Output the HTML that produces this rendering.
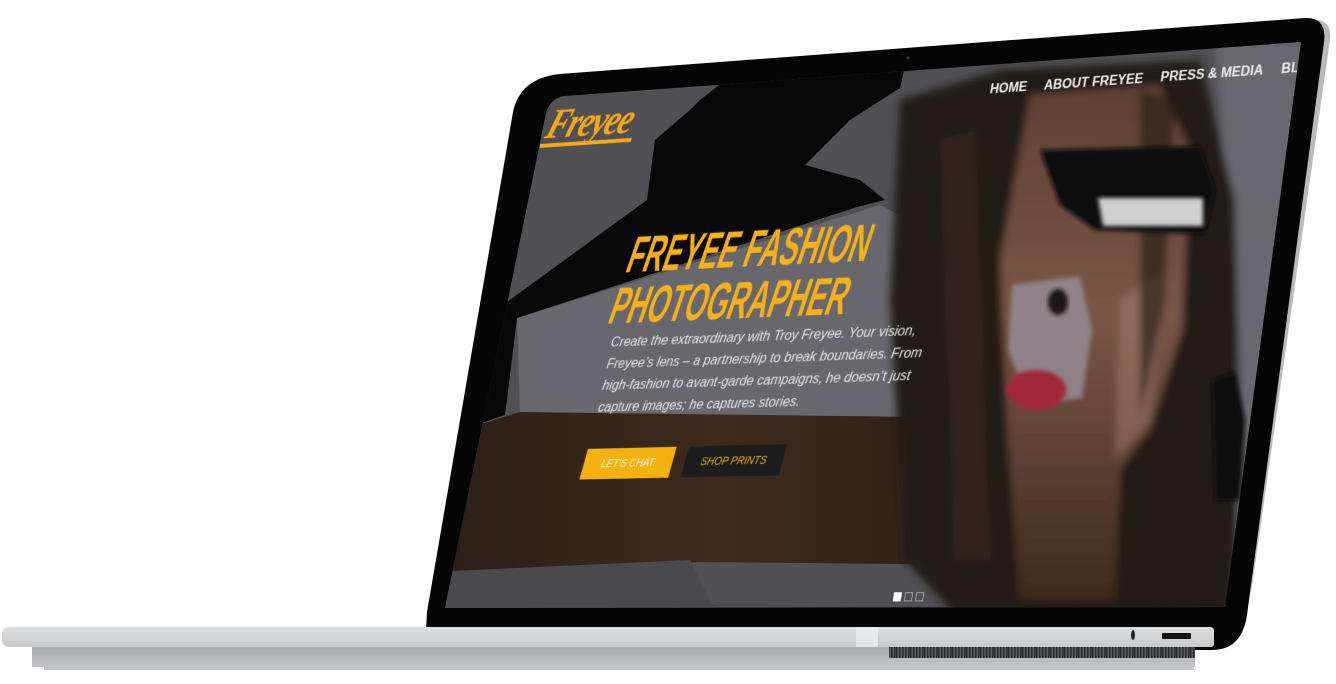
<!DOCTYPE html>
<html><head><meta charset="utf-8"><style>
html,body{margin:0;padding:0;background:#fff;width:1336px;height:684px;overflow:hidden;position:relative}
svg{position:absolute;left:0;top:0}
#scr{position:absolute;left:0;top:0;width:1000px;height:625px;overflow:hidden;transform-origin:0 0;
transform:matrix3d(0.62853,-0.058954,0,-0.000094137,-0.201008,0.772512,0,-0.0000741632,0,0,1,0,550,97,0,1);
font-family:"Liberation Sans",sans-serif}
.logo{position:absolute;left:12px;top:4px;color:#f5a917;font-family:"Liberation Serif",serif;font-style:italic;font-weight:bold;font-size:54px;letter-spacing:-3px;transform:skewX(-10deg) scaleX(.9);transform-origin:0 0}
.logo:after{content:"";position:absolute;left:-6px;right:-10px;top:56px;height:5px;background:#f5a917}
.nav{position:absolute;left:615px;top:22px;white-space:nowrap;color:#eee;font-weight:bold;font-size:16px}
.nav span{margin-right:22px}
h1{position:absolute;left:168px;top:176px;margin:0;color:#f6b01a;font-family:"Liberation Sans Narrow","Liberation Sans",sans-serif;font-weight:bold;font-size:63px;line-height:62px;white-space:nowrap;transform:skewX(-10deg) scaleX(.6);transform-origin:0 0}
p{position:absolute;left:160px;top:300px;margin:0;color:#e6e6e6;font-style:italic;font-size:17px;line-height:26px;white-space:nowrap}
.b{position:absolute;top:440px;height:36px;line-height:36px;text-align:center;font-size:13px;font-style:italic;transform:skewX(-6deg)}
.b1{left:155px;width:122px;background:#f5b10f;color:#fff}
.b2{left:294px;width:131px;background:#1c1c1c;color:#f5b10f}
.dots{position:absolute;left:598px;top:606px}
.dots i{display:inline-block;width:8px;height:8px;border:1px solid #aaa;margin-right:4px}
.dots i:first-child{background:#fff;border-color:#fff}
</style></head><body>
<svg width="1336" height="684" viewBox="0 0 1336 684">
<defs>
<clipPath id="c"><path d="M565,96 L1301,42 L1225,607 L445,608 L545,118 Q548,98 565,96 Z"/></clipPath>
<filter id="bl"><feGaussianBlur stdDeviation="4"/></filter>
<filter id="bl2"><feGaussianBlur stdDeviation="2"/></filter>
<linearGradient id="base" x1="0" y1="0" x2="0" y2="1"><stop offset="0" stop-color="#dcdee0"/><stop offset="1" stop-color="#c8cacc"/></linearGradient>
<linearGradient id="low" x1="0" y1="0" x2="0" y2="1"><stop offset="0" stop-color="#a9abae"/><stop offset="1" stop-color="#c3c5c8"/></linearGradient>
<linearGradient id="skin" x1="0" y1="0" x2="0" y2="1"><stop offset="0" stop-color="#5e4034"/><stop offset=".45" stop-color="#7a5546"/><stop offset="1" stop-color="#3e2a1e"/></linearGradient>
<linearGradient id="sh" x1="0" y1="0" x2="1" y2="0"><stop offset="0" stop-color="#2a1e16"/><stop offset=".5" stop-color="#3d2a1c"/><stop offset="1" stop-color="#2a1e17"/></linearGradient>
<pattern id="g" width="14" height="6" patternUnits="userSpaceOnUse"><rect width="14" height="6" fill="#5a5c5f"/><rect width="1.5" height="6" fill="#2a2b2d"/><rect x="3" width="1.5" height="6" fill="#2a2b2d"/><rect x="6" width="1.5" height="6" fill="#2a2b2d"/><rect x="9" width="1.5" height="6" fill="#2a2b2d"/><rect x="12" width="1.5" height="6" fill="#2a2b2d"/></pattern>
</defs>
<!-- lid -->
<path d="M1250,600 L1330,40 Q1332,22 1318,20 L1300,22 Z" fill="#b8babd"/>
<path d="M560,74 L1305,18 Q1327,17 1324,42 L1247,615 Q1242,650 1212,650 L425,650 L427,612 L513,112 Q520,78 560,74 Z" fill="#050505"/>
<circle cx="908" cy="58" r="1.5" fill="#334"/>
<!-- photo -->
<g clip-path="url(#c)">
<rect x="420" y="20" width="900" height="600" fill="#4f4f54"/>
<path d="M517,318 L880,205 L930,230 L960,420 L520,414 Z" fill="#67676d"/>
<path d="M430,330 L507,302 L647,200 L655,140 L690,110 L700,100 L733,74 L800,64 L907,58 L900,88 L850,120 L805,165 L860,180 L885,200 L857,207 L517,318 L505,415 L430,440 Z" fill="#080808"/>
<path d="M430,440 L520,412 L1000,418 L1010,565 L700,562 L430,575 Z" fill="url(#sh)"/>
<path d="M430,572 L690,560 L720,620 L430,620 Z" fill="#4a4a4e"/>
<g filter="url(#bl)">
<path d="M1215,40 L1320,40 L1300,620 L1240,620 L1235,300 Z" fill="#68686e"/>
<path d="M900,100 L1000,70 L1200,60 L1235,200 L1240,420 L1232,620 L960,620 L905,560 L890,300 Z" fill="#231c18"/>
<path d="M1030,95 L1160,85 L1190,150 L1182,330 L1150,430 L1120,470 L1115,600 L1020,600 L1008,440 L1000,260 Z" fill="url(#skin)"/>
<path d="M1120,300 L1165,270 L1150,420 L1115,460 Z" fill="#a88478" opacity=".45"/>
<path d="M1140,90 L1175,100 L1165,300 L1140,420 Z" fill="#2a201a" opacity=".7"/>
<path d="M940,140 L975,130 L990,560 L955,560 Z" fill="#3a2a20" opacity=".6"/>
</g>
<path d="M1040,150 L1200,146 L1215,190 L1205,234 L1095,230 L1060,205 Z" fill="#0c0c0c" filter="url(#bl2)"/>
<path d="M1098,198 L1203,198 L1203,226 L1103,226 Z" fill="#d0d0d0" filter="url(#bl2)"/>
<path d="M1012,285 L1080,276 L1092,330 L1082,398 L1030,405 L1008,350 Z" fill="#8f8288" filter="url(#bl2)"/>
<ellipse cx="1058" cy="302" rx="10" ry="13" fill="#1a1414" filter="url(#bl2)"/>
<ellipse cx="1036" cy="390" rx="30" ry="20" fill="#a02838" filter="url(#bl2)"/>
<path d="M1212,380 L1235,372 L1245,420 L1240,500 L1215,500 Z" fill="#0a0a0a" filter="url(#bl2)"/>
</g>
<!-- base -->
<path d="M32,646 L1195,646 L1195,667 L32,667 Z" fill="url(#low)"/>
<rect x="44" y="666" width="1150" height="4" fill="#c2c4c7"/>
<rect x="889" y="645" width="306" height="13" fill="url(#g)"/>
<path d="M10,627 L1210,627 Q1214,627 1214,631 L1214,644 Q1214,647 1210,647 L10,647 Q2,647 2,640 L2,634 Q2,627 10,627 Z" fill="url(#base)"/>
<rect x="856" y="627" width="22" height="20" fill="#eef0f2" opacity=".7"/>
<ellipse cx="1133" cy="635" rx="2" ry="5" fill="#222"/>
<rect x="1162" y="633" width="29" height="6" rx="1" fill="#111"/>
</svg>
<div id="scr">
<div class="logo">Freyee</div>
<div class="nav"><span>HOME</span><span>ABOUT FREYEE</span><span>PRESS &amp; MEDIA</span><span>BLOG</span></div>
<h1>FREYEE FASHION<br>PHOTOGRAPHER</h1>
<p>Create the extraordinary with Troy Freyee. Your vision,<br>Freyee’s lens – a partnership to break boundaries. From<br>high-fashion to avant-garde campaigns, he doesn’t just<br>capture images; he captures stories.</p>
<div class="b b1">LET'S CHAT</div>
<div class="b b2">SHOP PRINTS</div>
<div class="dots"><i></i><i></i><i></i></div>
</div>
</body></html>
